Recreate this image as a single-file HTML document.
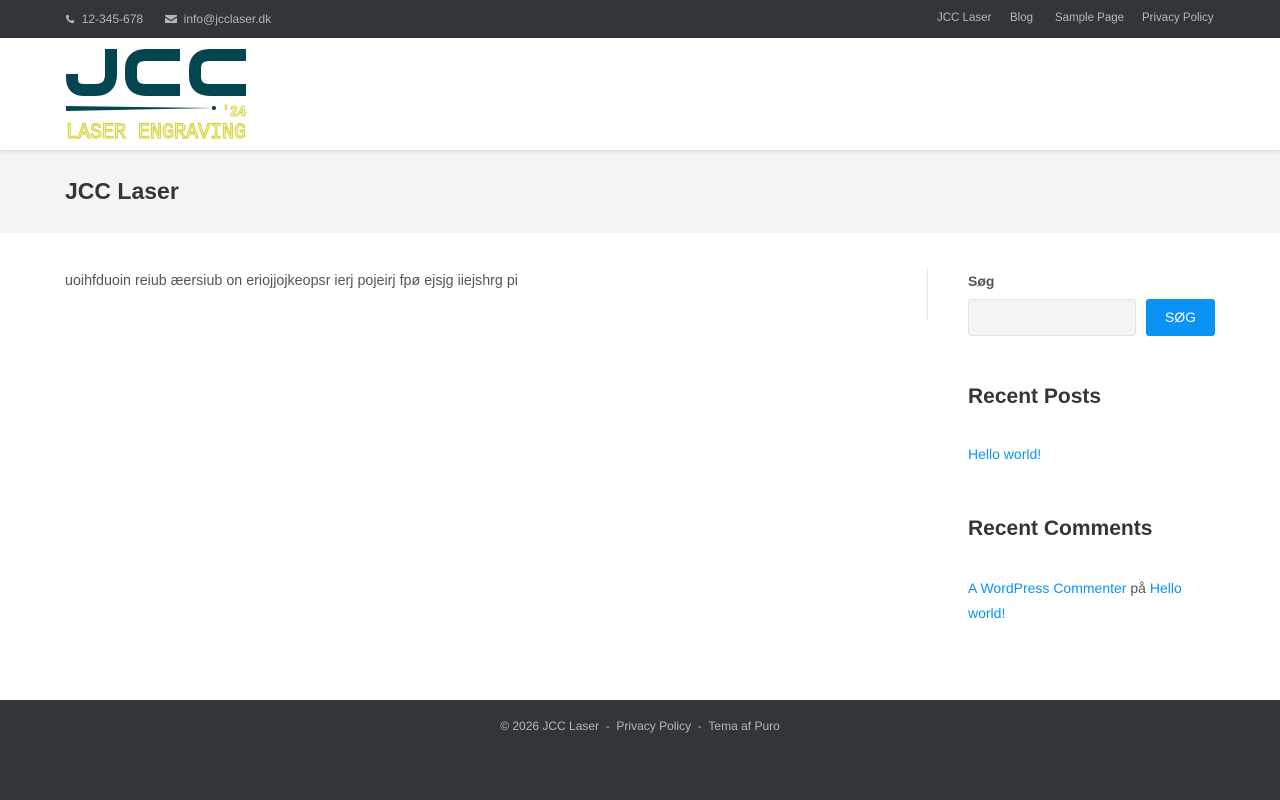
<!DOCTYPE html>
<html><head><meta charset="utf-8"><style>
*{margin:0;padding:0;box-sizing:border-box}
body{width:1280px;height:800px;font-family:"Liberation Sans",sans-serif;background:#fff;color:#555;position:relative;overflow:hidden}
.top{height:38px;background:#32353a;color:#b4b6b9;font-size:12px;position:relative}
.top span{position:absolute;top:12px}
.hdr{height:112px;background:#fff;box-shadow:0 1px 4px rgba(0,0,0,.15);position:relative;z-index:2}
.title{height:83px;background:#f4f4f4;position:relative}
a{color:#0a93f5;text-decoration:none}
.foot{position:absolute;left:0;top:700px;width:1280px;height:100px;background:#32353a;color:#b4b6b9;font-size:12px;text-align:center;padding-top:19px}
</style></head><body>
<div class="top">
<span style="left:65px"><svg width="10" height="10" viewBox="0 0 10 10" style="vertical-align:-1px"><path d="M1 1.5 L3 0.5 L4.3 3 L3.2 4 Q4.5 6.3 6 7 L7 5.8 L9.5 7 L8.5 9.3 Q4.5 9.5 1.5 5 Q0.5 3 1 1.5Z" fill="#b4b6b9"/></svg>&nbsp; 12-345-678</span>
<span style="left:165px"><svg width="12" height="10" viewBox="0 0 12 10" style="vertical-align:-1px"><path d="M0 1h12v1.2L6 6 0 2.2z M0 3.6L6 7.4 12 3.6V9H0z" fill="#b4b6b9"/></svg>&nbsp; info@jcclaser.dk</span>
<span style="left:937px;font-size:11.5px">JCC Laser</span>
<span style="left:1010px;font-size:11.5px">Blog</span>
<span style="left:1055px;font-size:11.5px">Sample Page</span>
<span style="left:1142px;font-size:11.5px">Privacy Policy</span>
</div>
<div class="hdr">
<svg width="190" height="110" style="position:absolute;left:60px;top:5px" viewBox="60 43 190 110">
<g fill="none" stroke="#044552" stroke-width="12">
<path d="M111 49 V74 Q111 90 95 90 H84 Q72 90 72 78 V74"/>
<path d="M180 55 H146 Q131 55 131 69 V76 Q131 90 146 90 H180"/>
<path d="M246 55 H210 Q195 55 195 69 V76 Q195 90 210 90 H246"/>
</g>
<path d="M66 106 L214 108 L66 111Z" fill="#044552"/>
<circle cx="214" cy="108" r="2" fill="#044552"/>
<text x="222" y="116" font-family="Liberation Mono,monospace" font-size="15" font-weight="bold" textLength="24" lengthAdjust="spacingAndGlyphs" fill="none" stroke="#d4d43a" stroke-width="1">'24</text>
<text x="66" y="138" font-family="Liberation Mono,monospace" font-size="22" textLength="180" lengthAdjust="spacingAndGlyphs" fill="none" stroke="#d4d43a" stroke-width="1.2">LASER ENGRAVING</text>
</svg>
</div>
<div class="title"><h1 style="position:absolute;left:65px;top:28px;font-size:23px;color:#32353a">JCC Laser</h1></div>
<p style="position:absolute;left:65px;top:273px;font-size:14.3px">uoihfduoin reiub æersiub on eriojjojkeopsr ierj pojeirj fpø ejsjg iiejshrg pi</p>
<div style="position:absolute;left:927px;top:269px;width:1px;height:51px;background:#e5e5e5"></div>
<div style="position:absolute;left:968px;top:273px;font-size:14px;font-weight:bold">Søg</div>
<div style="position:absolute;left:968px;top:299px;width:168px;height:37px;background:#f4f4f4;border:1px solid #e4e4e4;border-radius:3px"></div>
<div style="position:absolute;left:1146px;top:299px;width:69px;height:37px;background:#0a93f5;border-radius:3px;color:#fff;font-size:14px;text-align:center;line-height:37px">SØG</div>
<div style="position:absolute;left:968px;top:385px;font-size:21px;font-weight:bold;color:#32353a">Recent Posts</div>
<div style="position:absolute;left:968px;top:446px;font-size:14px"><a>Hello world!</a></div>
<div style="position:absolute;left:968px;top:517px;font-size:21px;font-weight:bold;color:#32353a">Recent Comments</div>
<div style="position:absolute;left:968px;top:576px;width:250px;font-size:14px;line-height:25px"><a>A WordPress Commenter</a> på <a>Hello world!</a></div>
<div class="foot">© 2026 JCC Laser &nbsp;- &nbsp;Privacy Policy &nbsp;- &nbsp;Tema af Puro</div>
</body></html>
